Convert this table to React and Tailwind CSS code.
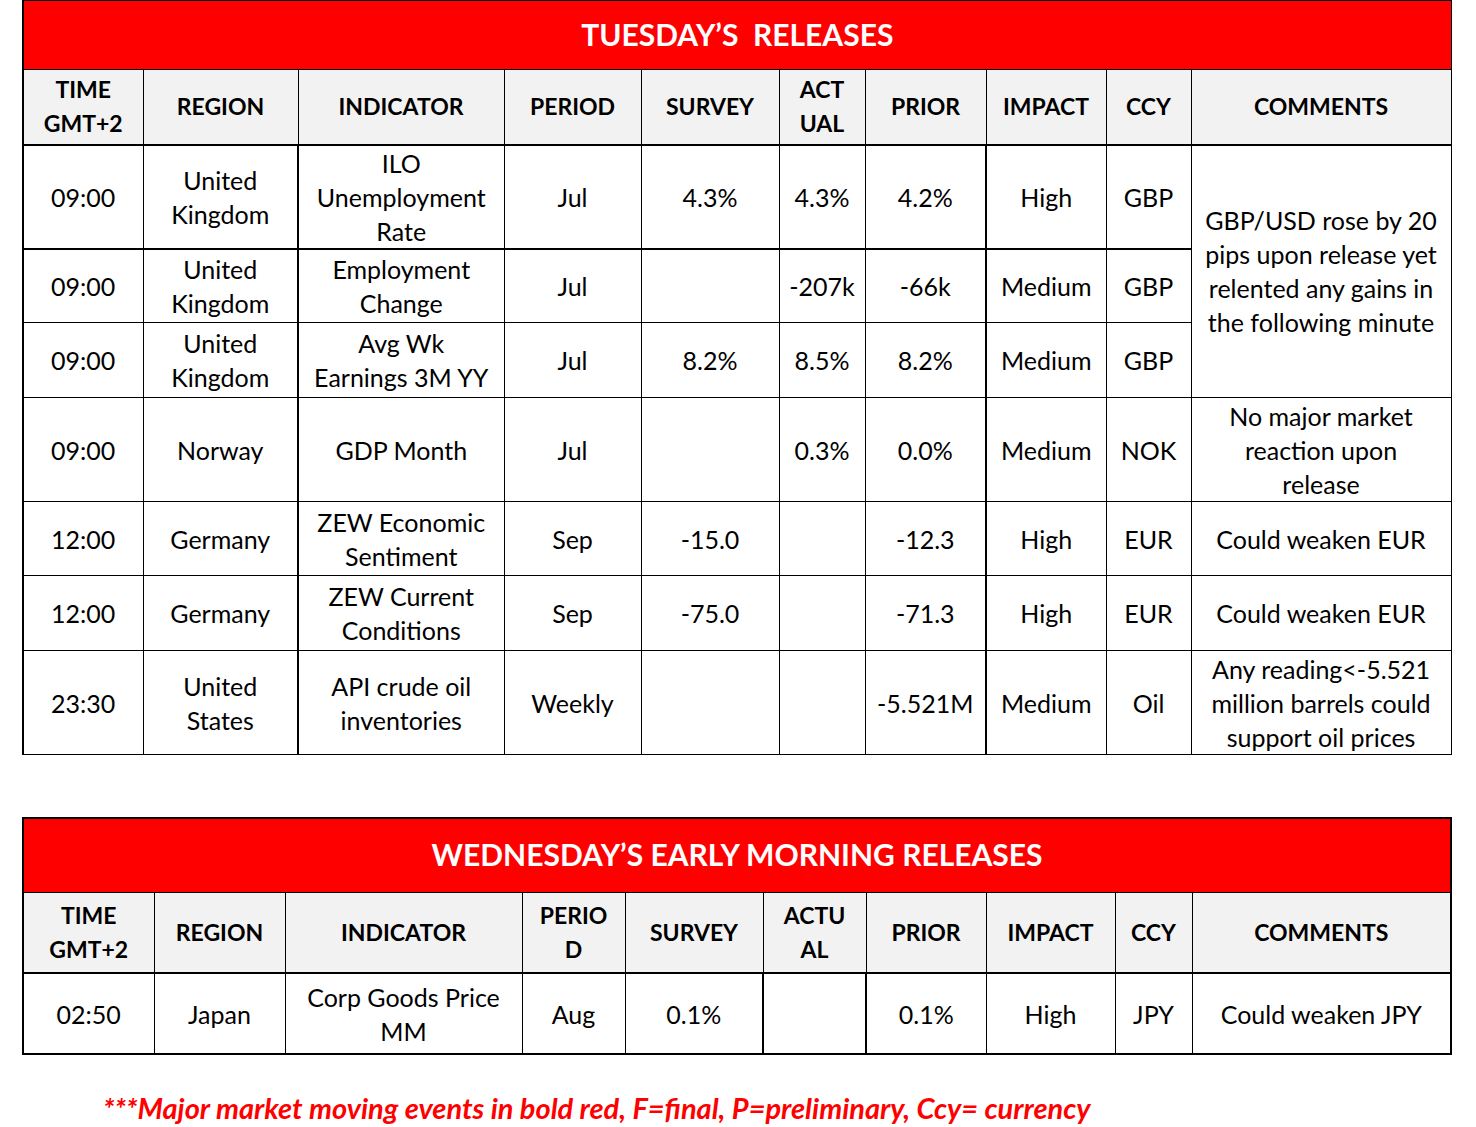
import React from "react";

const font = { fontFamily: "Lato, 'Open Sans', sans-serif" };

const t1cols = [120, 155, 206, 137, 138, 86, 121, 120, 85, 260];
const t2cols = [131, 131, 237, 103, 138, 103, 120, 129, 77, 259];

function Lines({ text }) {
  return text.split("\n").map((s, j) => <div key={j}>{s}</div>);
}

function HeadRow({ labels, h }) {
  return (
    <tr className={h}>
      {labels.map((l, i) => (
        <th
          key={i}
          className="border border-black border-b-2 bg-[#f2f2f2] text-[23px] font-bold leading-[34px] text-black text-center align-middle px-0 pt-0 pb-[1px]"
        >
          <Lines text={l} />
        </th>
      ))}
    </tr>
  );
}

function Cell({ children, thick, thickB, rowSpan }) {
  return (
    <td
      rowSpan={rowSpan}
      className={
        "border border-black text-[25px] leading-[34px] text-black text-center align-middle px-1 py-0 " +
        (thick ? "border-r-2 " : "") +
        (thickB ? "border-b-2" : "")
      }
    >
      <Lines text={children} />
    </td>
  );
}

const rows1 = [
  { h: "h-[104px]", c: ["09:00", "United\nKingdom", "ILO\nUnemployment\nRate", "Jul", "4.3%", "4.3%", "4.2%", "High", "GBP"] },
  { h: "h-[74px]", c: ["09:00", "United\nKingdom", "Employment\nChange", "Jul", "", "-207k", "-66k", "Medium", "GBP"] },
  { h: "h-[75px]", c: ["09:00", "United\nKingdom", "Avg Wk\nEarnings 3M YY", "Jul", "8.2%", "8.5%", "8.2%", "Medium", "GBP"] },
  { h: "h-[104px]", c: ["09:00", "Norway", "GDP Month", "Jul", "", "0.3%", "0.0%", "Medium", "NOK"], com: "No major market\nreaction upon\nrelease" },
  { h: "h-[74px]", c: ["12:00", "Germany", "ZEW Economic\nSentiment", "Sep", "-15.0", "", "-12.3", "High", "EUR"], com: "Could weaken EUR" },
  { h: "h-[75px]", c: ["12:00", "Germany", "ZEW Current\nConditions", "Sep", "-75.0", "", "-71.3", "High", "EUR"], com: "Could weaken EUR" },
  { h: "h-[104px]", c: ["23:30", "United\nStates", "API crude oil\ninventories", "Weekly", "", "", "-5.521M", "Medium", "Oil"], com: "Any reading<-5.521\nmillion barrels could\nsupport oil prices" },
];

export default function App() {
  return (
    <div className="w-[1476px] h-[1127px] bg-white pl-[22px]" style={font}>
      <table className="table-fixed border-collapse w-[1428px] border border-l-2 border-black">
        <colgroup>
          {t1cols.map((w, i) => (
            <col key={i} style={{ width: w }} />
          ))}
        </colgroup>
        <tbody>
          <tr className="h-[69px]">
            <td colSpan={10} className="bg-[#ff0000] text-white font-bold text-[30px] text-center align-middle whitespace-pre border border-black px-0 pt-0 pb-[2px]">
              {"TUESDAY’S  RELEASES"}
            </td>
          </tr>
          <HeadRow
            h="h-[75px]"
            labels={["TIME\nGMT+2", "REGION", "INDICATOR", "PERIOD", "SURVEY", "ACT\nUAL", "PRIOR", "IMPACT", "CCY", "COMMENTS"]}
          />
          {rows1.map((r, i) => (
            <tr key={i} className={r.h}>
              {r.c.map((v, j) => (
                <Cell key={j} thick={j === 1 || j === 6} thickB={i === 0}>
                  {v}
                </Cell>
              ))}
              {i === 0 && (
                <Cell rowSpan={3}>{"GBP/USD rose by 20\npips upon release yet\nrelented any gains in\nthe following minute"}</Cell>
              )}
              {i >= 3 && <Cell>{r.com}</Cell>}
            </tr>
          ))}
        </tbody>
      </table>

      <table className="table-fixed border-collapse w-[1428px] border-2 border-black mt-[62px]">
        <colgroup>
          {t2cols.map((w, i) => (
            <col key={i} style={{ width: w }} />
          ))}
        </colgroup>
        <tbody>
          <tr className="h-[74px]">
            <td colSpan={10} className="bg-[#ff0000] text-white font-bold text-[30px] text-center align-middle border border-black px-0 pt-0 pb-[2px]">
              WEDNESDAY’S EARLY MORNING RELEASES
            </td>
          </tr>
          <HeadRow
            h="h-[81px]"
            labels={["TIME\nGMT+2", "REGION", "INDICATOR", "PERIO\nD", "SURVEY", "ACTU\nAL", "PRIOR", "IMPACT", "CCY", "COMMENTS"]}
          />
          <tr className="h-[81px]">
            {["02:50", "Japan", "Corp Goods Price\nMM", "Aug", "0.1%", "", "0.1%", "High", "JPY", "Could weaken JPY"].map((v, j) => (
              <Cell key={j} thick={j === 4 || j === 5}>
                {v}
              </Cell>
            ))}
          </tr>
        </tbody>
      </table>

      <div className="mt-[36px] pl-[81px] text-[#ff0000] font-bold italic text-[29px] leading-[34px]">
        ***Major market moving events in bold red, F=final, P=preliminary, Ccy= currency
      </div>
    </div>
  );
}
